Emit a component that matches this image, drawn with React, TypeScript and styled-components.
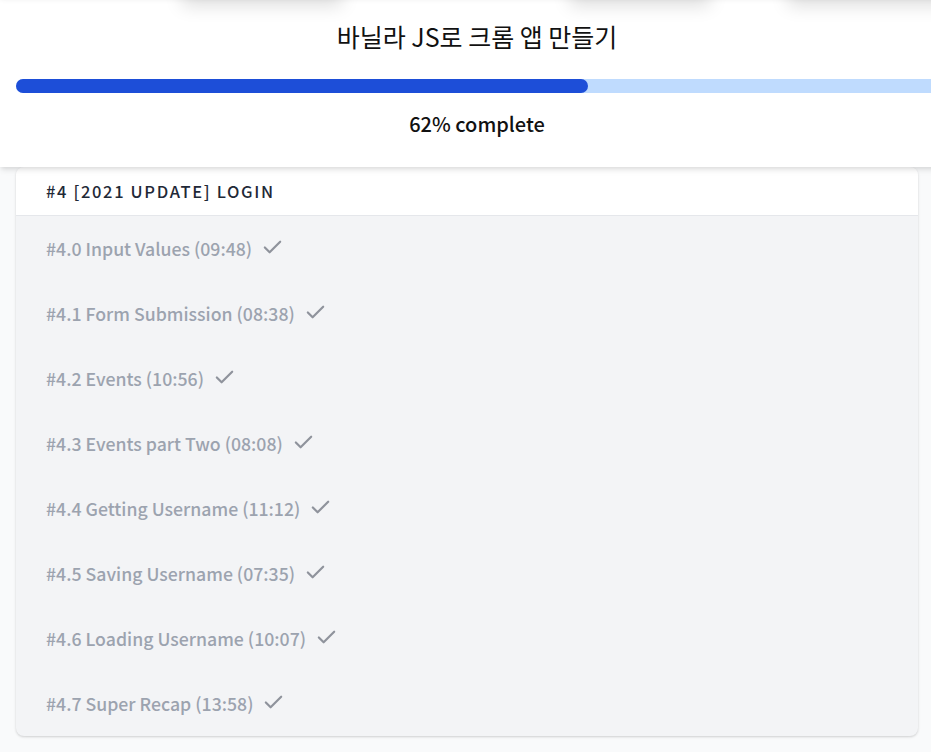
import styled, { createGlobalStyle } from 'styled-components';

const GlobalStyle = createGlobalStyle`
  body {
    margin: 0;
    background: #f9fafb;
    font-family: "Noto Sans CJK KR", "Noto Sans", sans-serif;
    overflow: hidden;
  }
`;

const lessons = [
  '#4.0 Input Values (09:48)',
  '#4.1 Form Submission (08:38)',
  '#4.2 Events (10:56)',
  '#4.3 Events part Two (08:08)',
  '#4.4 Getting Username (11:12)',
  '#4.5 Saving Username (07:35)',
  '#4.6 Loading Username (10:07)',
  '#4.7 Super Recap (13:58)',
];

const CheckIcon = () => (
  <svg width="23" height="23" viewBox="0 0 24 24" fill="none" stroke="currentColor" strokeWidth="2.3" strokeLinecap="round" strokeLinejoin="round">
    <path d="M20 6 9 17l-5-5" />
  </svg>
);

export default function App() {
  const progress = 62;
  return (
    <Page>
      <GlobalStyle />
      <Header>
        <GhostRow>
          <Ghost $width={160} />
          <Ghost $width={140} />
          <Ghost $width={170} />
        </GhostRow>
        <Title>바닐라 JS로 크롬 앱 만들기</Title>
        <Track>
          <Fill style={{ width: `${progress}%` }} />
        </Track>
        <Complete>{progress}% complete</Complete>
      </Header>
      <Card>
        <SectionTitle>#4 [2021 UPDATE] LOGIN</SectionTitle>
        <List>
          {lessons.map((lesson) => (
            <Lesson key={lesson}>
              <span>{lesson}</span>
              <CheckIcon />
            </Lesson>
          ))}
        </List>
      </Card>
    </Page>
  );
}

const Page = styled.div`
  min-height: 752px;
  display: flex;
  flex-direction: column;
  overflow: hidden;
`;

const Header = styled.header`
  position: relative;
  z-index: 2;
  width: 954px;
  box-sizing: border-box;
  background: #fff;
  padding: 22px 16px 31px;
  box-shadow: 0 4px 6px -1px rgba(0, 0, 0, 0.1), 0 2px 4px -1px rgba(0, 0, 0, 0.06);
`;

const GhostRow = styled.div`
  position: absolute;
  top: -40px;
  left: 0;
  right: 0;
  height: 38px;
  display: flex;
  padding-left: 182px;
  gap: 228px;
  box-shadow: 0 0 6px rgba(0, 0, 0, 0.12);
`;

const Ghost = styled.div<{ $width: number }>`
  width: ${(p) => p.$width}px;
  flex-shrink: 0;
  background: #fff;
  box-shadow: 0 8px 18px rgba(0, 0, 0, 0.13);

  &:nth-child(3) {
    margin-left: -150px;
    width: 200px;
  }
`;

const Title = styled.h1`
  margin: 0 0 29px;
  text-align: center;
  font-size: 25px;
  line-height: 28px;
  font-weight: 400;
  color: #111;
`;

const Track = styled.div`
  height: 14px;
  background: #bfdbfe;
  border-radius: 7px;
`;

const Fill = styled.div`
  height: 100%;
  background: #1d4ed8;
  border-radius: 7px;
`;

const Complete = styled.div`
  margin-top: 19px;
  text-align: center;
  font-size: 20px;
  line-height: 24px;
  font-weight: 500;
  color: #111;
`;

const Card = styled.section`
  position: relative;
  z-index: 1;
  margin: 0 13px 0 16px;
  background: #f3f4f6;
  border-radius: 8px;
  overflow: hidden;
  box-shadow: 0 1px 3px rgba(0, 0, 0, 0.12), 0 1px 2px rgba(0, 0, 0, 0.06);
`;

const SectionTitle = styled.h2`
  margin: 0;
  height: 49px;
  box-sizing: border-box;
  padding: 0 30px;
  display: flex;
  align-items: center;
  background: #fff;
  border-bottom: 1px solid #e5e7eb;
  font-size: 16.5px;
  font-weight: 500;
  letter-spacing: 0.1em;
  color: #1f2937;
`;

const List = styled.ul`
  margin: 0;
  padding: 0;
  list-style: none;
`;

const Lesson = styled.li`
  height: 65px;
  box-sizing: border-box;
  padding: 0 30px 2px;
  display: flex;
  align-items: center;
  gap: 9px;
  font-size: 17.7px;
  font-weight: 500;
  color: #9ca3af;

  svg {
    color: #8f939c;
  }
`;
